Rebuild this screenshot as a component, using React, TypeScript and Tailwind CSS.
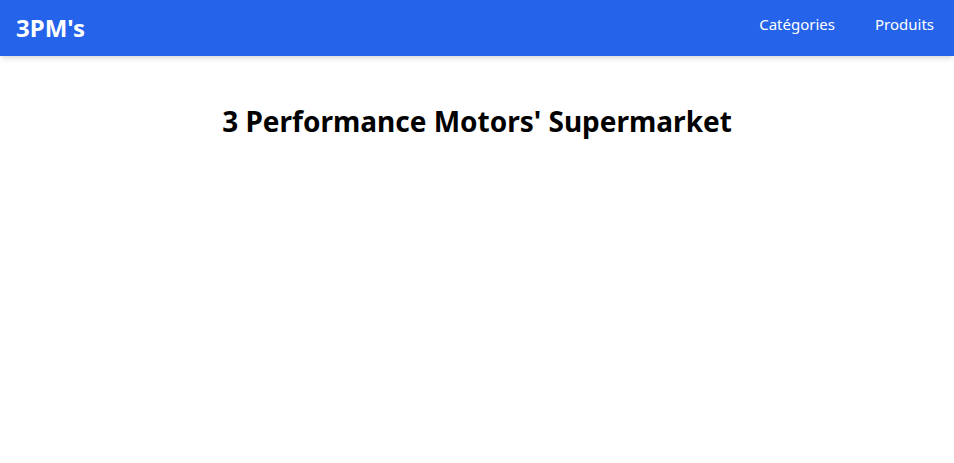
import React from 'react';

export default function App() {
  return (
    <div className="min-h-screen bg-white font-['Noto_Sans',sans-serif]">
      <header className="h-14 bg-[#2563eb] shadow-md flex items-center justify-between pl-4 pr-5">
        <span className="text-2xl font-bold text-white">3PM's</span>
        <nav className="flex items-center gap-10 text-white text-[15px] mb-2">
          <a href="#">Catégories</a>
          <a href="#">Produits</a>
        </nav>
      </header>
      <main className="pt-11 flex justify-center">
        <h1 className="text-[28px] font-bold text-black">3 Performance Motors' Supermarket</h1>
      </main>
    </div>
  );
}
